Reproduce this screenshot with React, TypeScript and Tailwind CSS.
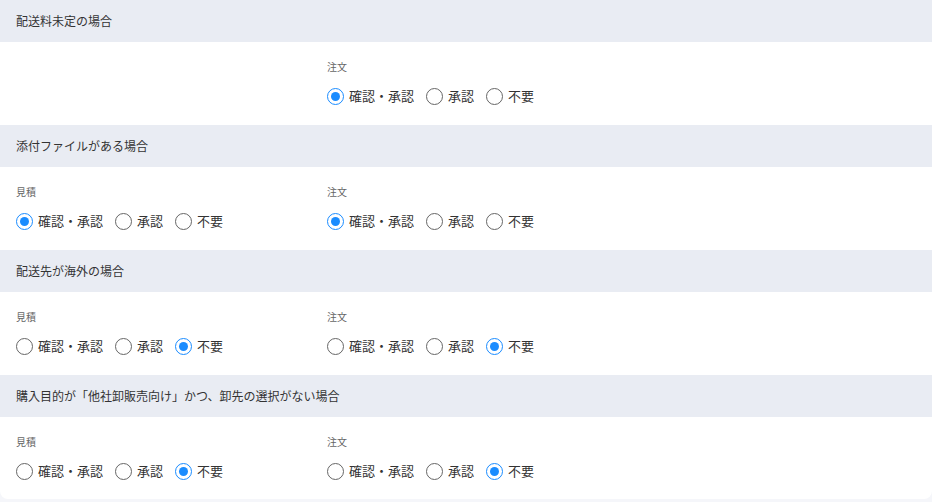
import React from 'react';

type Choice = 'both' | 'approve' | 'none';

type Group = {
  label: string;
  value: Choice;
};

type Section = {
  title: string;
  quote?: Group;
  order: Group;
};

const OPTIONS: { key: Choice; label: string }[] = [
  { key: 'both', label: '確認・承認' },
  { key: 'approve', label: '承認' },
  { key: 'none', label: '不要' },
];

const SECTIONS: Section[] = [
  {
    title: '配送料未定の場合',
    order: { label: '注文', value: 'both' },
  },
  {
    title: '添付ファイルがある場合',
    quote: { label: '見積', value: 'both' },
    order: { label: '注文', value: 'both' },
  },
  {
    title: '配送先が海外の場合',
    quote: { label: '見積', value: 'none' },
    order: { label: '注文', value: 'none' },
  },
  {
    title: '購入目的が「他社卸販売向け」かつ、卸先の選択がない場合',
    quote: { label: '見積', value: 'none' },
    order: { label: '注文', value: 'none' },
  },
];

function RadioGroup({ group }: { group: Group }) {
  const [value, setValue] = React.useState<Choice>(group.value);
  return (
    <div className="flex flex-col">
      <div className="h-[14px] text-[10px] leading-[14px] text-[#666]">{group.label}</div>
      <div className="mt-3 flex h-5 items-center gap-3">
        {OPTIONS.map((opt) => {
          const checked = opt.key === value;
          return (
            <button
              key={opt.key}
              type="button"
              onClick={() => setValue(opt.key)}
              className="flex items-center gap-[5px]"
            >
              <span
                className={`flex size-[17px] items-center justify-center rounded-full border ${
                  checked ? 'border-[#1a8cff]' : 'border-[#666]'
                }`}
              >
                {checked && <span className="size-[9px] rounded-full bg-[#1a8cff]" />}
              </span>
              <span className="text-[13px] leading-5 text-[#333]">{opt.label}</span>
            </button>
          );
        })}
      </div>
    </div>
  );
}

export default function App() {
  return (
    <div
      className="h-[502px] overflow-hidden bg-[#f5f6fa]"
      style={{ fontFamily: '"Noto Sans CJK JP", "Noto Sans", sans-serif' }}
    >
      <div className="overflow-hidden rounded-b-lg bg-white">
        {SECTIONS.map((section, i) => (
          <div key={`section-${i}`}>
            <div className="flex h-[42px] items-center bg-[#e9ecf3] px-4 text-[12px] text-[#333]">
              {section.title}
            </div>
            <div className={`flex px-4 pt-[18px] ${i === SECTIONS.length - 1 ? 'pb-[18px]' : 'pb-[19px]'}`}>
              <div className="w-[311px]">
                {section.quote && <RadioGroup group={section.quote} />}
              </div>
              <RadioGroup group={section.order} />
            </div>
          </div>
        ))}
      </div>
    </div>
  );
}
